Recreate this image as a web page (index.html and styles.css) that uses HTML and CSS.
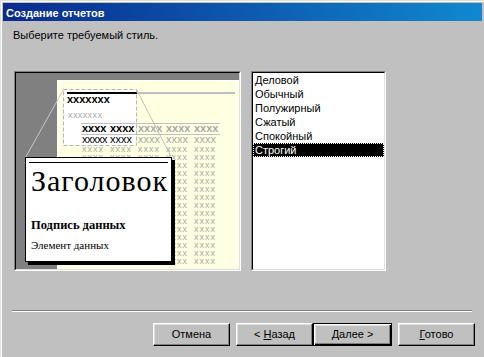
FILE: index.html
```html
<!DOCTYPE html>
<html>
<head>
    <title>Создание отчетов</title>
    <meta charset="utf-8">
    <link rel="stylesheet" href="styles.css">
</head>
<body>
    <div class="window">
        <div class="titlebar">Создание отчетов</div>

        <p class="prompt">Выберите требуемый стиль.</p>

        <div class="main">
            <div class="sunken preview-frame">
                <div class="well canvas">
                    <div class="page">
                        <div class="section"></div>
                        <div class="rule rule-head"><span class="rule-ink"></span></div>
                        <div class="label-bold">xxxxxxx</div>
                        <div class="label-gray">xxxxxxx</div>
                        <div class="rule rule-2"></div>
                        <div class="rule rule-3"></div>
                        <div class="rows">
                            <div class="row row-head">
                                <span class="cell ink">xxxx</span><span class="cell ink">xxxx</span><span class="cell">xxxx</span><span class="cell">xxxx</span><span class="cell">xxxx</span>
                            </div>
                            <div class="row row-data">
                                <span class="cell ink">xxxxx</span><span class="cell ink">xxxx</span><span class="cell">xxxx</span><span class="cell">xxxx</span><span class="cell">xxxx</span>
                            </div>
                            <div class="row row-gray">xxxx xxxx xxxx xxxx xxxx</div>
                            <div class="row row-gray">xxxx xxxx xxxx xxxx xxxx</div>
                            <div class="row row-gray">xxxx xxxx xxxx xxxx xxxx</div>
                            <div class="row row-gray">xxxx xxxx xxxx xxxx xxxx</div>
                            <div class="row row-gray">xxxx xxxx xxxx xxxx xxxx</div>
                            <div class="row row-gray">xxxx xxxx xxxx xxxx xxxx</div>
                            <div class="row row-gray">xxxx xxxx xxxx xxxx xxxx</div>
                            <div class="row row-gray">xxxx xxxx xxxx xxxx xxxx</div>
                            <div class="row row-gray">xxxx xxxx xxxx xxxx xxxx</div>
                            <div class="row row-gray">xxxx xxxx xxxx xxxx xxxx</div>
                            <div class="row row-gray">xxxx xxxx xxxx xxxx xxxx</div>
                            <div class="row row-gray">xxxx xxxx xxxx xxxx xxxx</div>
                            <div class="row row-gray">xxxx xxxx xxxx xxxx xxxx</div>
                            <div class="row row-gray">xxxx xxxx xxxx xxxx xxxx</div>
                            <div class="row row-gray">xxxx xxxx xxxx xxxx xxxx</div>
                        </div>
                    </div>

                    <!-- рамка выделенного раздела и линии выноски -->
                    <svg class="callout" width="223" height="196" viewBox="0 0 223 196">
                        <rect x="47.5" y="16.5" width="73" height="56" fill="none" stroke="#b4b4b4" stroke-dasharray="4 2"/>
                        <line x1="47.5" y1="16.5" x2="9.5" y2="84.5" stroke="#c8c8c8"/>
                        <line x1="120.5" y1="16.5" x2="155.5" y2="84.5" stroke="#c0c0c0"/>
                    </svg>

                    <div class="popup">
                        <div class="popup-rule"></div>
                        <div class="popup-title">Заголовок</div>
                        <div class="popup-caption">Подпись данных</div>
                        <div class="popup-item">Элемент данных</div>
                    </div>
                </div>
            </div>

            <div class="sunken list-frame">
                <ul class="well styles">
                    <li>Деловой</li>
                    <li>Обычный</li>
                    <li>Полужирный</li>
                    <li>Сжатый</li>
                    <li>Спокойный</li>
                    <li class="selected">Строгий</li>
                </ul>
            </div>
        </div>

        <div class="separator"></div>

        <div class="buttons">
            <button class="btn">Отмена</button>
            <button class="btn btn-back">&lt; <u>Н</u>азад</button>
            <button class="btn btn-default"><u>Д</u>алее &gt;</button>
            <button class="btn"><u>Г</u>отово</button>
        </div>
    </div>
</body>
</html>
```

FILE: styles.css
```css
body {
    margin: 0;
    background: #c0c0c0;
    font-family: "Liberation Sans", Arial, sans-serif;
    font-size: 11px;
    color: #000;
    overflow: hidden;
}
.window {
    height: 357px;
    box-sizing: border-box;
    padding: 2px 2px 0 2px;
    border-top: 1px solid #dfdfdf;
    border-left: 1px solid #dfdfdf;
    box-shadow: inset 1px 1px #fff;
}
.titlebar {
    height: 18px;
    box-sizing: border-box;
    padding: 2px 0 0 3px;
    line-height: 16px;
    font-weight: bold;
    color: #fff;
    background: linear-gradient(to right, #0a2a8e, #1088d0);
}
.prompt {
    margin: 8px 0 0 10px;
    line-height: 13px;
}
.main {
    display: flex;
    align-items: flex-start;
    gap: 10px;
    margin: 29px 0 0 11px;
}

/* вдавленная рамка в стиле Windows */
.sunken {
    box-sizing: border-box;
    border: 1px solid;
    border-color: #808080 #fff #fff #808080;
}
.well {
    box-sizing: border-box;
    height: 100%;
    border: 1px solid;
    border-color: #000 #dfdfdf #dfdfdf #000;
}
.preview-frame {
    width: 227px;
    height: 200px;
}
.canvas {
    position: relative;
    overflow: hidden;
    background: #808080;
}
.page {
    position: absolute;
    left: 41px;
    top: 7px;
    right: 0;
    bottom: 0;
    background: #ffffe1;
    box-shadow: inset 1px 1px #fff;
}
.section {
    position: absolute;
    left: 6px;
    top: 9px;
    width: 74px;
    height: 57px;
    background: #fff;
}
.rule {
    position: absolute;
    background: #c0c0c0;
}
.rule-head {
    left: 10px;
    top: 12px;
    width: 168px;
    height: 2px;
}
.rule-ink {
    display: block;
    width: 70px;
    height: 2px;
    background: #000;
}
.rule-2 {
    left: 24px;
    top: 43px;
    width: 139px;
    height: 1px;
}
.rule-3 {
    left: 24px;
    top: 54px;
    width: 139px;
    height: 1px;
}
.label-bold {
    position: absolute;
    left: 10px;
    top: 14px;
    line-height: 11px;
    font-weight: bold;
}
.label-gray {
    position: absolute;
    left: 11px;
    top: 31px;
    font-size: 9px;
    line-height: 9px;
    letter-spacing: 0.4px;
    color: #a9a9a9;
}
.rows {
    position: absolute;
    left: 25px;
    top: 43px;
    color: #a9a9a9;
    white-space: nowrap;
}
.row {
    line-height: 8px;
}
.row-head {
    line-height: 11px;
    font-weight: bold;
}
.row-data {
    line-height: 11px;
}
.row-gray {
    font-size: 9px;
    letter-spacing: 1px;
    word-spacing: 2.5px;
}
.cell {
    display: inline-block;
    width: 28px;
}
.ink {
    color: #000;
}
.row-data .ink:first-child {
    letter-spacing: -0.5px;
}
.callout {
    position: absolute;
    left: 0;
    top: 0;
}
.popup {
    position: absolute;
    left: 9px;
    top: 84px;
    width: 147px;
    height: 105px;
    box-sizing: border-box;
    padding: 4px 3px 0 3px;
    border: 1px solid #000;
    background: #fff;
    box-shadow: 3px 3px 0 #000;
    font-family: "Liberation Serif", "Times New Roman", serif;
    white-space: nowrap;
}
.popup-rule {
    border-top: 1px solid #000;
}
.popup-title {
    margin-top: 3px;
    padding-left: 2px;
    font-size: 30px;
    line-height: 29px;
    letter-spacing: 1px;
}
.popup-caption {
    margin-top: 23px;
    padding-left: 2px;
    font-size: 12.5px;
    line-height: 15px;
    font-weight: bold;
}
.popup-item {
    margin-top: 6px;
    padding-left: 2px;
    font-size: 11px;
    line-height: 13px;
}

.list-frame {
    width: 135px;
    height: 200px;
}
.styles {
    margin: 0;
    padding: 0;
    list-style: none;
    background: #fff;
}
.styles li {
    padding-left: 2px;
    line-height: 14px;
}
.styles li.selected {
    background: #000;
    color: #fff;
    outline: 1px dotted #fff;
    outline-offset: -1px;
}

.separator {
    width: 460px;
    margin: 39px 0 0 9px;
    border-top: 1px solid #808080;
    border-bottom: 1px solid #fff;
}
.buttons {
    display: flex;
    gap: 6px;
    margin: 11px 0 0 150px;
}
.btn {
    width: 77px;
    height: 23px;
    box-sizing: border-box;
    padding: 0;
    font-family: "Liberation Sans", Arial, sans-serif;
    font-size: 11px;
    line-height: 21px;
    color: #000;
    background: #c0c0c0;
    border: 1px solid;
    border-color: #fff #000 #000 #fff;
    box-shadow: inset -1px -1px #808080, inset 1px 1px #dfdfdf;
}
.btn-back {
    margin-right: -6px;
}
.btn-default {
    width: 79px;
    border-color: #000;
    box-shadow: inset 1px 1px #fff, inset -1px -1px #000, inset -2px -2px #808080, inset 2px 2px #dfdfdf;
}
```
